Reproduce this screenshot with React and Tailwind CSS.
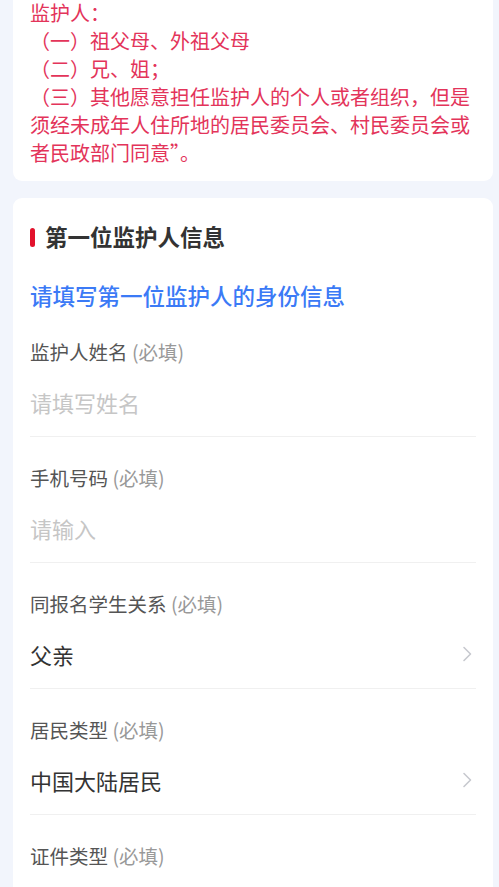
import React from "react";

const font = { fontFamily: '"Noto Sans CJK SC", "Noto Sans", sans-serif' };

function Chevron() {
  return (
    <svg width="12" height="18" viewBox="0 0 12 18" fill="none" className="shrink-0">
      <path d="M3 2.5 L9.5 9 L3 15.5" stroke="#c7c9cf" strokeWidth="1.6" strokeLinecap="round" strokeLinejoin="round" />
    </svg>
  );
}

function Field({ label, value, placeholder, select, last }) {
  return (
    <div className={`pt-[27px] pb-[19px] ${last ? "" : "border-b border-[#f0f0f0]"}`}>
      <div className="text-[19.5px] leading-[28px] text-[#555]">
        {label} <span className="text-[#999]">(必填)</span>
      </div>
      <div className="mt-[21px] flex items-center justify-between h-[30px]">
        <span className={`text-[22px] leading-[30px] ${placeholder ? "text-[#c6c6c6]" : "text-[#333]"}`}>
          {value}
        </span>
        {select && <div className="mr-[3px]"><Chevron /></div>}
      </div>
    </div>
  );
}

export default function App() {
  return (
    <div className="min-h-[887px] bg-[#f2f5fc] pl-[13px] pr-[6px] overflow-hidden" style={font}>
      <div className="-mt-[12px] bg-white rounded-[9px] pt-[11px] pb-[14px] pl-[17px] pr-[20px] text-[20px] leading-[28px] text-[#e3345a]">
        <div>监护人：</div>
        <div>（一）祖父母、外祖父母</div>
        <div>（二）兄、姐；</div>
        <div>（三）其他愿意担任监护人的个人或者组织，但是须经未成年人住所地的居民委员会、村民委员会或者民政部门同意”。</div>
      </div>
      <div className="mt-[17px] bg-white rounded-[9px] pt-[22px] px-[17px]">
        <div className="flex items-center h-[32px]">
          <div className="w-[5px] h-[19px] rounded-full bg-[#e2122c] mr-[10px] mt-[3px]" />
          <span className="text-[22.5px] leading-[32px] font-bold text-[#333]">第一位监护人信息</span>
        </div>
        <div className="mt-[27px] text-[22.5px] leading-[32px] font-medium text-[#3b7af6]">请填写第一位监护人的身份信息</div>
        <Field label="监护人姓名" value="请填写姓名" placeholder />
        <Field label="手机号码" value="请输入" placeholder />
        <Field label="同报名学生关系" value="父亲" select />
        <Field label="居民类型" value="中国大陆居民" select />
        <Field label="证件类型" value="请选择" placeholder select last />
      </div>
    </div>
  );
}
